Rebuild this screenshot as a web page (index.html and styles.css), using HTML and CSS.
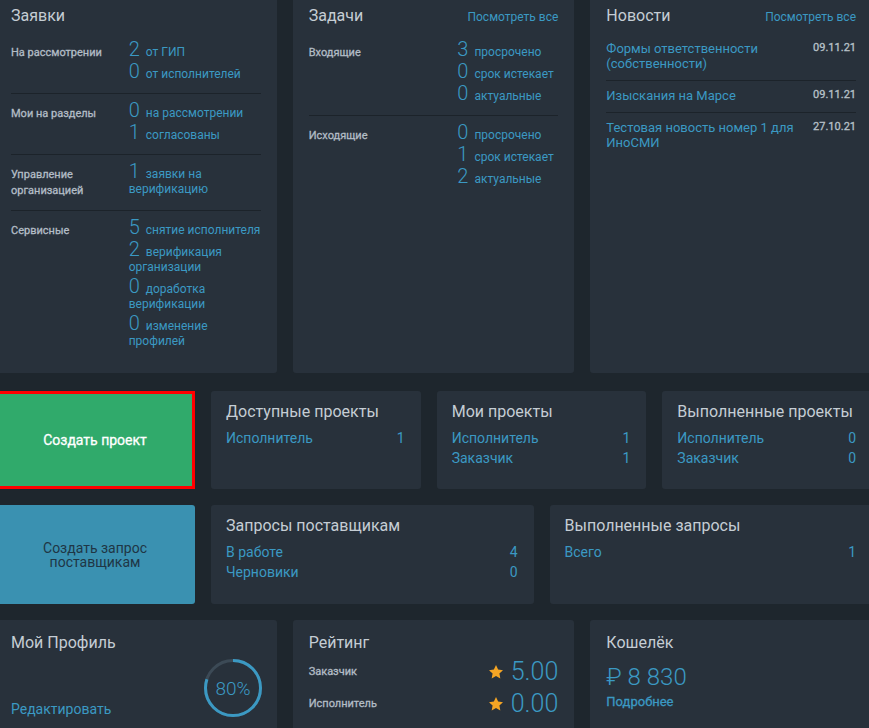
FILE: index.html
```html
<!DOCTYPE html>
<html lang="ru">
<head>
<meta charset="utf-8">
<title>Dashboard</title>
<link rel="stylesheet" href="styles.css">
</head>
<body>
<div class="board">
  <div class="row row-top">
    <section class="panel">
      <div class="panel-head"><h2 class="title">Заявки</h2></div>
      <div class="stat-list">
        <div class="stat-row">
          <div class="stat-label">На рассмотрении</div>
          <div class="stat-values stat-values--wide">
            <div class="val"><span class="num">2</span>от ГИП</div>
            <div class="val"><span class="num">0</span>от исполнителей</div>
          </div>
        </div>
        <div class="stat-row">
          <div class="stat-label">Мои на разделы</div>
          <div class="stat-values stat-values--wide">
            <div class="val"><span class="num">0</span>на рассмотрении</div>
            <div class="val"><span class="num">1</span>согласованы</div>
          </div>
        </div>
        <div class="stat-row">
          <div class="stat-label">Управление организацией</div>
          <div class="stat-values stat-values--wide">
            <div class="val"><span class="num">1</span>заявки на верификацию</div>
          </div>
        </div>
        <div class="stat-row">
          <div class="stat-label">Сервисные</div>
          <div class="stat-values stat-values--wide">
            <div class="val"><span class="num">5</span>снятие исполнителя</div>
            <div class="val"><span class="num">2</span>верификация организации</div>
            <div class="val"><span class="num">0</span>доработка верификации</div>
            <div class="val"><span class="num">0</span>изменение профилей</div>
          </div>
        </div>
      </div>
    </section>

    <section class="panel">
      <div class="panel-head"><h2 class="title">Задачи</h2><a class="see-all">Посмотреть все</a></div>
      <div class="stat-list">
        <div class="stat-row">
          <div class="stat-label">Входящие</div>
          <div class="stat-values stat-values--narrow">
            <div class="val"><span class="num">3</span>просрочено</div>
            <div class="val"><span class="num">0</span>срок истекает</div>
            <div class="val"><span class="num">0</span>актуальные</div>
          </div>
        </div>
        <div class="stat-row">
          <div class="stat-label">Исходящие</div>
          <div class="stat-values stat-values--narrow">
            <div class="val"><span class="num">0</span>просрочено</div>
            <div class="val"><span class="num">1</span>срок истекает</div>
            <div class="val"><span class="num">2</span>актуальные</div>
          </div>
        </div>
      </div>
    </section>

    <section class="panel">
      <div class="panel-head"><h2 class="title">Новости</h2><a class="see-all">Посмотреть все</a></div>
      <div class="news-list">
        <div class="news-item">
          <a class="news-link">Формы ответственности (собственности)</a>
          <span class="news-date">09.11.21</span>
        </div>
        <div class="news-item">
          <a class="news-link">Изыскания на Марсе</a>
          <span class="news-date">09.11.21</span>
        </div>
        <div class="news-item">
          <a class="news-link">Тестовая новость номер 1 для ИноСМИ</a>
          <span class="news-date">27.10.21</span>
        </div>
      </div>
    </section>
  </div>

  <div class="row row-cards row-cards--a">
    <button class="action action--green">Создать проект</button>
    <div class="cards">
      <section class="card">
        <h3 class="card-title">Доступные проекты</h3>
        <div class="card-line"><span>Исполнитель</span><span>1</span></div>
      </section>
      <section class="card">
        <h3 class="card-title">Мои проекты</h3>
        <div class="card-line"><span>Исполнитель</span><span>1</span></div>
        <div class="card-line"><span>Заказчик</span><span>1</span></div>
      </section>
      <section class="card">
        <h3 class="card-title">Выполненные проекты</h3>
        <div class="card-line"><span>Исполнитель</span><span>0</span></div>
        <div class="card-line"><span>Заказчик</span><span>0</span></div>
      </section>
    </div>
  </div>

  <div class="row row-cards row-cards--b">
    <button class="action action--blue">Создать запрос поставщикам</button>
    <div class="cards">
      <section class="card">
        <h3 class="card-title">Запросы поставщикам</h3>
        <div class="card-line"><span>В работе</span><span>4</span></div>
        <div class="card-line"><span>Черновики</span><span>0</span></div>
      </section>
      <section class="card">
        <h3 class="card-title">Выполненные запросы</h3>
        <div class="card-line"><span>Всего</span><span>1</span></div>
      </section>
    </div>
  </div>

  <div class="row row-bottom">
    <section class="panel">
      <h2 class="title">Мой Профиль</h2>
      <div class="profile-body">
        <a class="edit-link">Редактировать</a>
        <svg class="donut" width="58" height="58" viewBox="0 0 58 58">
          <circle cx="29" cy="29" r="27.5" fill="none" stroke="#3c4a56" stroke-width="3"/>
          <circle cx="29" cy="29" r="27.5" fill="none" stroke="#3b99c3" stroke-width="3" stroke-dasharray="138.23 172.79" transform="rotate(-90 29 29)"/>
          <text x="29" y="36" text-anchor="middle" class="donut-text">80%</text>
        </svg>
      </div>
    </section>

    <section class="panel">
      <h2 class="title">Рейтинг</h2>
      <div class="rating-list">
        <div class="rating-row">
          <span class="stat-label">Заказчик</span>
          <span class="score">
            <svg class="star" width="16" height="16" viewBox="0 0 24 24"><path d="M12 1.5l3.2 6.9 7.3.9-5.4 5.1 1.4 7.4L12 18.1l-6.5 3.7 1.4-7.4L1.5 9.3l7.3-.9z" fill="#f5a524"/></svg>
            <span class="score-num">5.00</span>
          </span>
        </div>
        <div class="rating-row">
          <span class="stat-label">Исполнитель</span>
          <span class="score">
            <svg class="star" width="16" height="16" viewBox="0 0 24 24"><path d="M12 1.5l3.2 6.9 7.3.9-5.4 5.1 1.4 7.4L12 18.1l-6.5 3.7 1.4-7.4L1.5 9.3l7.3-.9z" fill="#f5a524"/></svg>
            <span class="score-num">0.00</span>
          </span>
        </div>
      </div>
    </section>

    <section class="panel">
      <h2 class="title">Кошелёк</h2>
      <div class="wallet-amount">₽ 8 830</div>
      <a class="wallet-more">Подробнее</a>
    </section>
  </div>
</div>
</body>
</html>
```

FILE: styles.css
```css
html, body {
  margin: 0;
  padding: 0;
  overflow: hidden;
  background: #1e262d;
}

body {
  font-family: Roboto, "Liberation Sans", sans-serif;
  color: #c5cdd4;
}

.board {
  width: 877px;
  margin: -7px 0 0 -5px;
  display: flex;
  flex-direction: column;
  gap: 16px;
}

.row {
  display: flex;
  gap: 16px;
}

.row-top {
  height: 380px;
  margin-bottom: 2px;
}

.row-bottom {
  height: 130px;
}

.row-top .panel,
.row-bottom .panel {
  flex: 1 1 0;
  min-width: 0;
}

.panel {
  background: #28313b;
  border-radius: 3px;
  padding: 13px 16px;
  box-sizing: border-box;
}

.panel-head {
  display: flex;
  justify-content: space-between;
  align-items: baseline;
}

.title {
  margin: 0;
  font-size: 16px;
  line-height: 20px;
  font-weight: 400;
  color: #c5cdd4;
}

.see-all {
  font-size: 12px;
  color: #3b99c3;
}

/* medium-weight imitation */
.stat-label,
.news-date,
.wallet-more,
.action--green {
  font-weight: 400;
  -webkit-text-stroke: 0.3px currentColor;
}

/* stat lists */
.stat-list {
  margin-top: 7px;
}

.stat-row {
  display: flex;
  align-items: baseline;
  padding: 5px 0 11px;
  border-bottom: 1px solid #1c232a;
}

.stat-row:last-child {
  border-bottom: none;
}

.stat-label {
  font-size: 11px;
  line-height: 16px;
  color: #b3bdc6;
}

.stat-values {
  margin-left: auto;
  flex-shrink: 0;
}

.stat-values--wide {
  width: 132px;
}

.stat-values--narrow {
  width: 101px;
}

.val {
  font-size: 12px;
  line-height: 15px;
  color: #3b99c3;
}

.num {
  font-size: 20px;
  line-height: 22px;
  font-weight: 300;
  margin-right: 6px;
}

/* news */
.news-list {
  margin-top: 8px;
}

.news-item {
  display: flex;
  align-items: flex-start;
  gap: 12px;
  padding: 7px 0 9px;
  border-bottom: 1px solid #1c232a;
}

.news-item:last-child {
  border-bottom: none;
}

.news-link {
  flex: 1 1 auto;
  font-size: 13px;
  line-height: 15px;
  color: #3b99c3;
}

.news-date {
  flex-shrink: 0;
  font-size: 11px;
  line-height: 13px;
  color: #b8c1c9;
}

/* card rows */
.row-cards--a {
  height: 98px;
}

.row-cards--b {
  height: 99px;
}

.action {
  width: 200px;
  flex-shrink: 0;
  border: none;
  border-radius: 3px;
  font-family: inherit;
  font-size: 14px;
  padding: 0 20px;
}

.action--green {
  background: #30aa6b;
  color: #ffffff;
  border: 3px solid #ff0000;
  border-radius: 0;
}

.action--blue {
  background: #3a91b1;
  color: #1f3645;
  line-height: 14px;
  padding: 0 40px;
}

.cards {
  flex: 1 1 auto;
  display: flex;
  gap: 16px;
}

.card {
  flex: 1 1 0;
  min-width: 0;
  background: #28313b;
  border-radius: 3px;
  padding: 11px 16px 0 15px;
  box-sizing: border-box;
}

.card-title {
  margin: 0 0 6px;
  font-size: 16px;
  line-height: 20px;
  font-weight: 400;
  color: #c5cdd4;
}

.card-line {
  display: flex;
  justify-content: space-between;
  font-size: 14px;
  line-height: 20px;
  color: #3b99c3;
}

/* profile */
.profile-body {
  display: flex;
  justify-content: space-between;
  align-items: flex-end;
  margin-top: 6px;
}

.edit-link {
  font-size: 14px;
  line-height: 20px;
  color: #3b99c3;
  margin-bottom: -2px;
}

.donut {
  display: block;
  margin-right: -1px;
}

.donut-text {
  font-family: Roboto, sans-serif;
  font-size: 19px;
  font-weight: 300;
  fill: #3b99c3;
}

/* rating */
.rating-list {
  margin-top: 3px;
}

.rating-row {
  display: flex;
  justify-content: space-between;
  align-items: center;
  height: 32px;
}

.score {
  display: flex;
  align-items: center;
  gap: 7px;
}

.star {
  display: block;
}

.score-num {
  font-size: 25px;
  line-height: 32px;
  font-weight: 300;
  color: #3b99c3;
}

/* wallet */
.wallet-amount {
  margin-top: 9px;
  font-size: 24px;
  line-height: 30px;
  font-weight: 300;
  color: #3b99c3;
}

.wallet-more {
  display: block;
  margin-top: 2px;
  font-size: 13px;
  line-height: 16px;
  color: #3b99c3;
}
```
